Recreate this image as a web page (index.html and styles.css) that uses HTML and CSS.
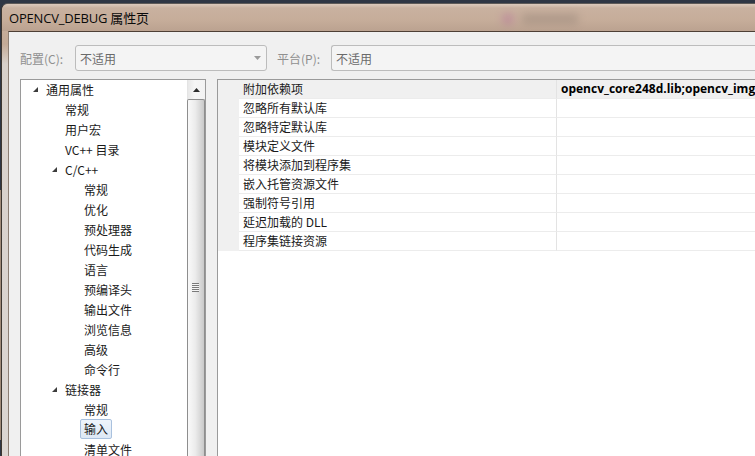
FILE: index.html
```html
<!DOCTYPE html>
<html>
<head>
<meta charset="utf-8">
<link rel="stylesheet" href="styles.css">
</head>
<body>
<div class="desk-edge"></div>
<div class="window">
  <div class="titlebar">
    <span class="title">OPENCV_DEBUG 属性页</span>
    <div class="ghost"><span class="ghost-dot"></span><span class="ghost-bar"></span></div>
  </div>
  <div class="client">
    <div class="toolbar">
      <span class="lbl lbl1">配置(C):</span>
      <div class="combo combo1"><span>不适用</span><svg class="arrow" width="7" height="4" viewBox="0 0 7 4"><polygon points="0,0 7,0 3.5,4" fill="#9a9a9a"/></svg></div>
      <span class="lbl lbl2">平台(P):</span>
      <div class="combo combo2"><span>不适用</span></div>
    </div>
    <div class="panels">
      <div class="tree">
        <div class="tree-items">
          <div class="ti l0"><span class="tw"><svg width="5" height="5" viewBox="0 0 5 5"><polygon points="5,0 5,5 0,5" fill="#3c3c3c"/></svg></span><span class="tl">通用属性</span></div>
          <div class="ti l1"><span class="tw"></span><span class="tl">常规</span></div>
          <div class="ti l1"><span class="tw"></span><span class="tl">用户宏</span></div>
          <div class="ti l1"><span class="tw"></span><span class="tl">VC++ 目录</span></div>
          <div class="ti l1"><span class="tw"><svg width="5" height="5" viewBox="0 0 5 5"><polygon points="5,0 5,5 0,5" fill="#3c3c3c"/></svg></span><span class="tl">C/C++</span></div>
          <div class="ti l2"><span class="tw"></span><span class="tl">常规</span></div>
          <div class="ti l2"><span class="tw"></span><span class="tl">优化</span></div>
          <div class="ti l2"><span class="tw"></span><span class="tl">预处理器</span></div>
          <div class="ti l2"><span class="tw"></span><span class="tl">代码生成</span></div>
          <div class="ti l2"><span class="tw"></span><span class="tl">语言</span></div>
          <div class="ti l2"><span class="tw"></span><span class="tl">预编译头</span></div>
          <div class="ti l2"><span class="tw"></span><span class="tl">输出文件</span></div>
          <div class="ti l2"><span class="tw"></span><span class="tl">浏览信息</span></div>
          <div class="ti l2"><span class="tw"></span><span class="tl">高级</span></div>
          <div class="ti l2"><span class="tw"></span><span class="tl">命令行</span></div>
          <div class="ti l1"><span class="tw"><svg width="5" height="5" viewBox="0 0 5 5"><polygon points="5,0 5,5 0,5" fill="#3c3c3c"/></svg></span><span class="tl">链接器</span></div>
          <div class="ti l2"><span class="tw"></span><span class="tl">常规</span></div>
          <div class="ti l2 sel"><span class="tw"></span><span class="tl">输入</span></div>
          <div class="ti l2"><span class="tw"></span><span class="tl">清单文件</span></div>
        </div>
        <div class="vscroll">
          <div class="sb-up"><svg width="7" height="4" viewBox="0 0 7 4"><polygon points="3.5,0 7,4 0,4" fill="#2c2c2c"/></svg></div>
          <div class="sb-thumb"><span class="grip"></span></div>
        </div>
      </div>
      <div class="grid">
        <div class="prow cur"><span class="gut"></span><span class="pn">附加依赖项</span><span class="pv">opencv_core248d.lib;opencv_imgproc248d.lib;opencv_highgui248d.lib</span></div>
        <div class="prow"><span class="gut"></span><span class="pn">忽略所有默认库</span><span class="pv"></span></div>
        <div class="prow"><span class="gut"></span><span class="pn">忽略特定默认库</span><span class="pv"></span></div>
        <div class="prow"><span class="gut"></span><span class="pn">模块定义文件</span><span class="pv"></span></div>
        <div class="prow"><span class="gut"></span><span class="pn">将模块添加到程序集</span><span class="pv"></span></div>
        <div class="prow"><span class="gut"></span><span class="pn">嵌入托管资源文件</span><span class="pv"></span></div>
        <div class="prow"><span class="gut"></span><span class="pn">强制符号引用</span><span class="pv"></span></div>
        <div class="prow"><span class="gut"></span><span class="pn">延迟加载的 DLL</span><span class="pv"></span></div>
        <div class="prow"><span class="gut"></span><span class="pn">程序集链接资源</span><span class="pv"></span></div>
      </div>
    </div>
  </div>
</div>
</body>
</html>
```
FILE: styles.css
```css
html, body {
  margin: 0;
  width: 755px;
  height: 456px;
  overflow: hidden;
}
body {
  background: #2f3644;
  font-family: "Noto Sans", "Noto Sans CJK SC", sans-serif;
  font-size: 12px;
  color: #1e1e1e;
  position: relative;
}
.desk-edge {
  position: absolute;
  left: 0;
  top: 190px;
  width: 2px;
  height: 250px;
  background: #a08a78;
}
.window {
  position: relative;
  margin: 3px 0 0 1px;
  height: 453px;
  border-top: 1px solid #5e5a58;
  border-left: 1px solid #3d3630;
  border-top-left-radius: 7px;
  background: linear-gradient(180deg, #d3bfb1 0px, #c7ae9b 20px, #c3aa97 40px, #d8d0ca 60px, #dcd6d2 100%);
  display: flex;
  flex-direction: column;
}
.titlebar {
  height: 27px;
  display: flex;
  align-items: center;
  padding-left: 7px;
  position: relative;
  background: linear-gradient(180deg, #dccabd 0px, #c9b1a0 4px, #c6ad9a 16px, #bba290 27px);
  border-top-left-radius: 6px;
}
.title {
  font-family: "Open Sans", "Noto Sans CJK SC", sans-serif;
  font-size: 13px;
  color: #0a0a0a;
  letter-spacing: -0.2px;
}
.ghost {
  position: absolute;
  left: 500px;
  top: 5px;
  width: 96px;
  height: 20px;
  filter: blur(4px);
  display: flex;
  align-items: center;
  gap: 8px;
  opacity: 0.4;
}
.ghost-dot {
  width: 12px;
  height: 12px;
  border-radius: 6px;
  background: #b0609a;
}
.ghost-bar {
  width: 56px;
  height: 10px;
  background: #8a7a70;
}
.client {
  flex: 1;
  margin-left: 6px;
  background: #f0f0f0;
  border-top: 1px solid #4d3f35;
  border-left: 1px solid #8c7e74;
  padding: 13px 0 0 11px;
  display: flex;
  flex-direction: column;
  min-height: 0;
}
.toolbar {
  display: flex;
  align-items: center;
  height: 26px;
}
.lbl {
  color: #8f8f8f;
  font-family: "Noto Sans CJK SC", sans-serif;
  font-size: 12px;
}
.lbl1 { width: 55px; }
.lbl2 { width: 54px; margin-left: 10px; }
.combo {
  border: 1px solid #bcbcbc;
  border-radius: 3px;
  background: #f4f4f4;
  display: flex;
  align-items: center;
  padding-left: 4px;
  color: #6a6a6a;
  font-family: "Noto Sans CJK SC", sans-serif;
  box-sizing: border-box;
  height: 26px;
}
.combo1 {
  width: 192px;
  justify-content: space-between;
  padding-right: 5px;
}
.combo2 {
  flex: 1;
  border-right: none;
  border-radius: 3px 0 0 3px;
}
.panels {
  display: flex;
  margin-top: 8px;
  flex: 1;
  min-height: 0;
}
.tree {
  width: 186px;
  box-sizing: border-box;
  border: 1px solid #9a9a9a;
  border-bottom: none;
  background: #ffffff;
  display: flex;
  font-family: "Noto Sans CJK SC", sans-serif;
}
.tree-items {
  flex: 1;
  margin-top: -1px;
}
.ti {
  height: 20px;
  display: flex;
  align-items: center;
  color: #1a1a1a;
}
.ti.l0 { padding-left: 12px; }
.ti.l1 { padding-left: 31px; }
.ti.l2 { padding-left: 50px; }
.tw {
  width: 13px;
  display: flex;
  align-items: center;
}
.tw svg { display: block; margin-top: 1px; }
.tl {
  white-space: nowrap;
}
.ti.sel .tl {
  margin-left: -4px;
  padding: 0 3px;
  height: 18px;
  line-height: 18px;
  border: 1px solid #a9c1de;
  border-radius: 2px;
  background: linear-gradient(180deg, #eef4fb, #dde8f5);
}
.vscroll {
  width: 17px;
  background: linear-gradient(90deg, #e8e8e8, #f6f6f6 40%, #f2f2f2);
  border-left: 1px solid #e4e4e4;
  display: flex;
  flex-direction: column;
}
.sb-up {
  height: 19px;
  display: flex;
  align-items: center;
  justify-content: center;
}
.sb-thumb {
  flex: 1;
  margin: 0 0 0 -1px;
  border: 1px solid #8e8e8e;
  border-bottom: none;
  border-radius: 2px 2px 0 0;
  background: linear-gradient(90deg, #f9f9f9 0%, #ececec 45%, #d6d6d6 80%, #c9c9c9 100%);
  position: relative;
}
.grip {
  position: absolute;
  left: 4px;
  top: 183px;
  width: 7px;
  height: 9px;
  background: repeating-linear-gradient(180deg, #7a7a7a 0px, #7a7a7a 1px, #f4f4f4 1px, #f4f4f4 2px);
}
.grid {
  flex: 1;
  margin-left: 11px;
  border-left: 1px solid #9a9a9a;
  border-top: 1px solid #9a9a9a;
  background: #ffffff;
  font-family: "Noto Sans CJK SC", sans-serif;
  overflow: hidden;
}
.prow {
  display: grid;
  grid-template-columns: 21px 318px 1fr;
  height: 19px;
}
.gut {
  background: #f0f0f0;
}
.pn {
  padding-left: 4px;
  border-right: 1px solid #e3e3e3;
  border-bottom: 1px solid #ececec;
  line-height: 18px;
  white-space: nowrap;
  color: #1a1a1a;
}
.pv {
  padding-left: 4px;
  border-bottom: 1px solid #ececec;
  line-height: 18px;
  white-space: nowrap;
  overflow: hidden;
  font-family: "Open Sans", "Noto Sans", sans-serif;
  font-weight: bold;
  font-size: 12px;
  color: #000;
}
.prow.cur .pn,
.prow.cur .pv {
  background: #f0f0f0;
}
```
